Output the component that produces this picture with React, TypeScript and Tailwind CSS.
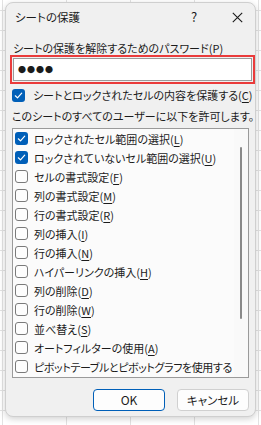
import React from "react";

const items = [
  { label: "ロックされたセル範囲の選択", key: "L", checked: true },
  { label: "ロックされていないセル範囲の選択", key: "U", checked: true },
  { label: "セルの書式設定", key: "F", checked: false },
  { label: "列の書式設定", key: "M", checked: false },
  { label: "行の書式設定", key: "R", checked: false },
  { label: "列の挿入", key: "I", checked: false },
  { label: "行の挿入", key: "N", checked: false },
  { label: "ハイパーリンクの挿入", key: "H", checked: false },
  { label: "列の削除", key: "D", checked: false },
  { label: "行の削除", key: "W", checked: false },
  { label: "並べ替え", key: "S", checked: false },
  { label: "オートフィルターの使用", key: "A", checked: false },
  { label: "ピボットテーブルとピボットグラフを使用する", key: "", checked: false },
];

function CheckBox({ checked }: { checked: boolean }) {
  if (checked) {
    return (
      <span className="flex h-[13px] w-[13px] shrink-0 items-center justify-center rounded-[3px] bg-[#005fb8]">
        <svg width="9" height="9" viewBox="0 0 9 9" fill="none">
          <path d="M1.3 4.8 L3.5 6.9 L7.7 2.2" stroke="white" strokeWidth="1.2" strokeLinecap="round" strokeLinejoin="round" />
        </svg>
      </span>
    );
  }
  return <span className="h-[13px] w-[13px] shrink-0 rounded-[3px] border border-[#7a7a7a] bg-[#fdfdfd]" />;
}

function Label({ text, k }: { text: string; k: string }) {
  return (
    <span className={k ? "whitespace-nowrap" : "whitespace-nowrap tracking-[-0.4px]"}>
      {text}
      {k && (
        <>
          (<span className="underline underline-offset-2">{k}</span>)
        </>
      )}
    </span>
  );
}

export default function App() {
  return (
    <div
      className="relative h-[425px] w-[261px] overflow-hidden bg-white bg-[linear-gradient(#e2e2e2_1px,transparent_1px),linear-gradient(90deg,#e2e2e2_1px,transparent_1px)] bg-[size:64px_20px] pl-[5px] pt-[2px] text-[11px] leading-[16px] text-[#1b1b1b] [font-feature-settings:'palt']"
      style={{ fontFamily: '"Noto Sans CJK JP", "Noto Sans", sans-serif', backgroundPosition: "2px 10px" }}
    >
      <div className="flex h-[415px] w-[251px] flex-col rounded-[8px] border border-[#cfcfcf] bg-[#f0f0f0] shadow-[0_2px_6px_rgba(0,0,0,0.18)]">
        <div className="flex h-[26px] items-center pl-[9px] pt-[2px]">
          <span className="flex-1 text-[11.5px]">シートの保護</span>
          <span className="w-[14px] text-[13px]">?</span>
          <span className="ml-[26px] mr-[12px] flex w-[12px] items-center justify-center">
            <svg width="11" height="11" viewBox="0 0 11 11">
              <path d="M0.8 0.8 L10.2 10.2 M10.2 0.8 L0.8 10.2" stroke="#1b1b1b" strokeWidth="1.1" />
            </svg>
          </span>
        </div>

        <div className="mt-[12px] pl-[7px] leading-[14px]">
          <Label text="シートの保護を解除するためのパスワード" k="P" />
        </div>

        <div className="ml-[4px] mt-[0px] border-2 border-[#ea3b3b] p-[1px]">
          <div className="flex h-[23px] items-center border border-[#9a9a9a] bg-white pl-[4px] text-[8px] tracking-[1px]">
            ●●●●
          </div>
        </div>

        <div className="mt-[2px] flex h-[18px] items-center gap-[8px] pl-[6px]">
          <CheckBox checked />
          <Label text="シートとロックされたセルの内容を保護する" k="C" />
        </div>

        <div className="mt-[4px] whitespace-nowrap pl-[6px]">このシートのすべてのユーザーに以下を許可します。</div>

        <div className="ml-[6px] mr-[6px] mt-[4px] flex h-[250px] border border-[#9a9a9a] bg-[#fbfbfb]">
          <div className="flex-1 overflow-hidden">
            {items.map((it) => (
              <div key={it.label} className="flex h-[19px] items-center gap-[6px] pl-[2px]">
                <CheckBox checked={it.checked} />
                <Label text={it.label} k={it.key} />
              </div>
            ))}
          </div>
          <div className="flex w-[14px] shrink-0 justify-center bg-[#f9f9f9] pt-[18px]">
            <div className="h-[172px] w-[2px] rounded-full bg-[#8a8a8a]" />
          </div>
        </div>

        <div className="mt-[11px] flex justify-end gap-[12px] pr-[6px]">
          <button className="h-[22px] w-[72px] rounded-[4px] border border-[#005fb8] bg-[#fdfdfd] text-[12px]">OK</button>
          <button className="h-[22px] w-[72px] rounded-[4px] border border-[#d0d0d0] bg-[#fdfdfd] text-[11.5px]">キャンセル</button>
        </div>
      </div>
    </div>
  );
}
